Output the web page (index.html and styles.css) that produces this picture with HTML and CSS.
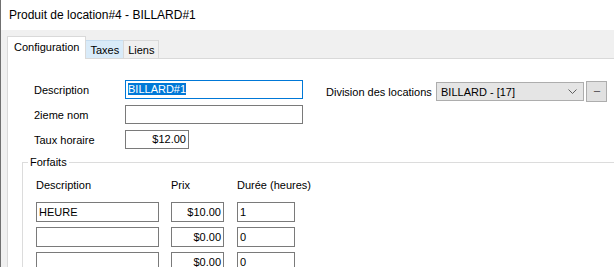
FILE: index.html
```html
<!DOCTYPE html>
<html lang="fr">
<head>
    <meta charset="UTF-8">
    <title>Produit de location#4 - BILLARD#1</title>
    <link rel="stylesheet" href="styles.css">
</head>
<body>
    <div class="window">
        <div class="titlebar">Produit de location#4 - BILLARD#1</div>

        <div class="tabstrip">
            <div class="tab active">Configuration</div>
            <div class="tab hover">Taxes</div>
            <div class="tab">Liens</div>
        </div>

        <div class="panel">
            <div class="top-form">
                <div class="fields">
                    <span class="label">Description</span>
                    <div class="textbox focus"><span class="sel">BILLARD#1</span></div>
                    <span class="label">2ieme nom</span>
                    <div class="textbox"></div>
                    <span class="label">Taux horaire</span>
                    <div class="textbox short">$12.00</div>
                </div>

                <div class="division">
                    <span class="division-label">Division des locations</span>
                    <div class="combo">
                        <span>BILLARD - [17]</span>
                        <svg width="9" height="6" viewBox="0 0 9 6"><polyline points="0.5,0.5 4.5,4.5 8.5,0.5" fill="none" stroke="#606060" stroke-width="1"/></svg>
                    </div>
                    <div class="dots-btn">---</div>
                </div>
            </div>

            <fieldset class="groupbox">
                <legend>Forfaits</legend>
                <div class="forfaits">
                    <span class="head">Description</span>
                    <span class="head">Prix</span>
                    <span class="head">Durée (heures)</span>

                    <div class="textbox desc">HEURE</div>
                    <div class="textbox price">$10.00</div>
                    <div class="textbox dur">1</div>

                    <div class="textbox desc"></div>
                    <div class="textbox price">$0.00</div>
                    <div class="textbox dur">0</div>

                    <div class="textbox desc"></div>
                    <div class="textbox price">$0.00</div>
                    <div class="textbox dur">0</div>
                </div>
            </fieldset>
        </div>
    </div>
</body>
</html>
```

FILE: styles.css
```css
/* fenêtre de base */
body {
    margin: 0;
    font-family: "Liberation Sans", Arial, sans-serif;
    font-size: 11px;
    color: #000;
    background-color: #fff;
    overflow: hidden;
}

.window {
    width: 614px;
    height: 267px;
    box-sizing: border-box;
    border-left: 1px solid #707070;
    background-color: #f0f0f0;
    display: flex;
    flex-direction: column;
    overflow: hidden;
}

.titlebar {
    flex-shrink: 0;
    height: 30px;
    line-height: 31px;
    padding-left: 8px;
    font-size: 12px;
    background-color: #fff;
}

/* onglets */
.tabstrip {
    flex-shrink: 0;
    height: 28px;
    box-sizing: border-box;
    padding-left: 6px;
    display: flex;
    align-items: flex-end;
}

.tab {
    height: 18px;
    line-height: 18px;
    padding: 0 4px;
    box-sizing: border-box;
    border: 1px solid #d9d9d9;
    border-bottom: none;
    margin-left: -1px;
    background-color: #f0f0f0;
}

.tab.active {
    height: 23px;
    line-height: 21px;
    padding: 0 6px;
    margin-left: 0;
    margin-bottom: -1px;
    background-color: #fff;
    position: relative;
    z-index: 1;
}

.tab.hover {
    background-color: #d9ebf9;
    border-color: #c5dcef;
}

.panel {
    flex: 1 0 auto;
    background-color: #fff;
    border-top: 1px solid #d9d9d9;
    border-left: 1px solid #d9d9d9;
    margin-left: 6px;
    padding: 21px 0 0 14px;
}

/* champs du haut */
.top-form {
    display: flex;
    align-items: flex-start;
    padding-left: 12px;
}

.fields {
    display: grid;
    grid-template-columns: 91px 178px;
    row-gap: 6px;
    align-items: center;
}

.textbox {
    height: 19px;
    line-height: 17px;
    box-sizing: border-box;
    border: 1px solid #7a7a7a;
    background-color: #fff;
    padding: 0 2px;
    white-space: nowrap;
    overflow: hidden;
}

.textbox.focus {
    border-color: #0078d7;
}

.sel {
    background-color: #0078d7;
    color: #fff;
}

.textbox.short {
    width: 64px;
    text-align: right;
}

.division {
    display: flex;
    align-items: center;
    margin-left: 23px;
    margin-top: 1px;
}

.division-label {
    width: 110px;
}

.combo {
    width: 148px;
    height: 19px;
    box-sizing: border-box;
    border: 1px solid #adadad;
    background-color: #e5e5e5;
    display: flex;
    align-items: center;
    justify-content: space-between;
    padding: 0 6px 0 4px;
}

.dots-btn {
    width: 21px;
    height: 21px;
    box-sizing: border-box;
    margin-left: 2px;
    border: 1px solid #adadad;
    background-color: #e1e1e1;
    text-align: center;
    line-height: 18px;
    font-size: 9px;
    letter-spacing: -1px;
    color: #333;
}

/* groupe Forfaits */
.groupbox {
    width: 640px;
    box-sizing: border-box;
    margin: 6px 0 0 0;
    padding: 0 0 0 5px;
    border: 1px solid #dcdcdc;
}

.groupbox legend {
    padding: 0 2px;
    line-height: 14px;
}

.forfaits {
    display: grid;
    grid-template-columns: 135px 66px 58px;
    row-gap: 5px;
    margin: 9px 0 0 8px;
}

.head {
    line-height: 14px;
    margin-bottom: 5px;
    white-space: nowrap;
}

.forfaits .textbox {
    height: 20px;
    line-height: 18px;
}

.textbox.desc {
    width: 123px;
}

.textbox.price {
    width: 53px;
    text-align: right;
}

.textbox.dur {
    width: 58px;
}
```
